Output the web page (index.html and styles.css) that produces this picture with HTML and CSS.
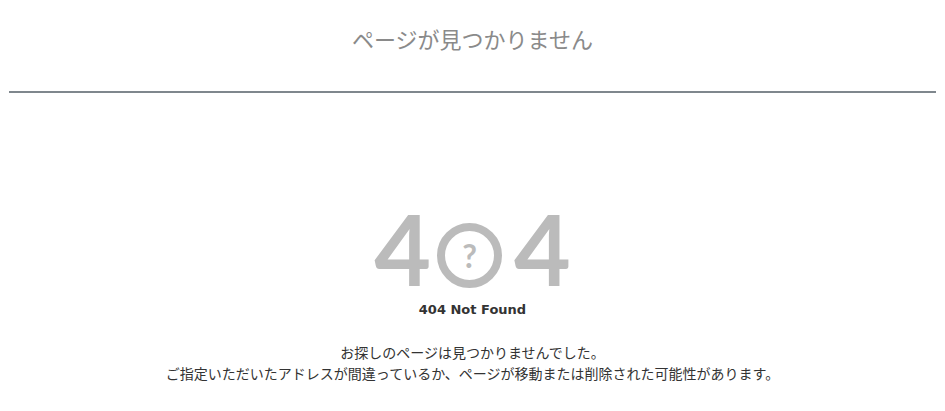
FILE: index.html
```html
<!DOCTYPE html>
<html lang="ja">
<head>
    <meta charset="utf-8">
    <title>ページが見つかりません</title>
    <link rel="stylesheet" href="styles.css">
</head>
<body>
    <div class="page-header">
      <h1>ページが見つかりません</h1>
    </div>

    <div class="not-found">
      <div class="error-mark">
        <span class="digit">4</span>
        <span class="circle">?</span>
        <span class="digit">4</span>
      </div>
      <h2>404 Not Found</h2>
      <p>お探しのページは見つかりませんでした。<br>ご指定いただいたアドレスが間違っているか、ページが移動または削除された可能性があります。</p>
    </div>
</body>
</html>
```

FILE: styles.css
```css
body {
  margin: 0;
  padding: 0 9px;
  background: #fff;
  color: #333;
  font-family: "Noto Sans CJK JP", "DejaVu Sans", sans-serif;
}

.page-header {
  padding-top: 22px;
  height: 69px;
  border-bottom: 2px solid #7f878d;
}

.page-header h1 {
  margin: 0;
  text-align: center;
  font-size: 22px;
  line-height: 32px;
  font-weight: normal;
  color: #8a8a8a;
}

.not-found {
  padding-top: 115px;
  text-align: center;
}

.error-mark {
  display: flex;
  justify-content: center;
  align-items: flex-end;
  height: 80px;
  color: #bbb;
}

.digit {
  font-family: Lato, "DejaVu Sans", sans-serif;
  font-weight: bold;
  font-size: 98px;
  line-height: 80px;
}

.circle {
  box-sizing: border-box;
  width: 65px;
  height: 65px;
  margin: 0 12px 0 6px;
  border: 8px solid #bbb;
  border-radius: 50%;
  font-family: Lato, "DejaVu Sans", sans-serif;
  font-weight: bold;
  font-size: 32px;
  line-height: 49px;
}

.not-found h2 {
  margin: 12px 0 0;
  font-family: "DejaVu Sans", sans-serif;
  font-size: 13px;
  line-height: 20px;
  color: #333;
}

.not-found p {
  margin: 22px 0 0;
  font-size: 14px;
  line-height: 21px;
  color: #333;
}
```
